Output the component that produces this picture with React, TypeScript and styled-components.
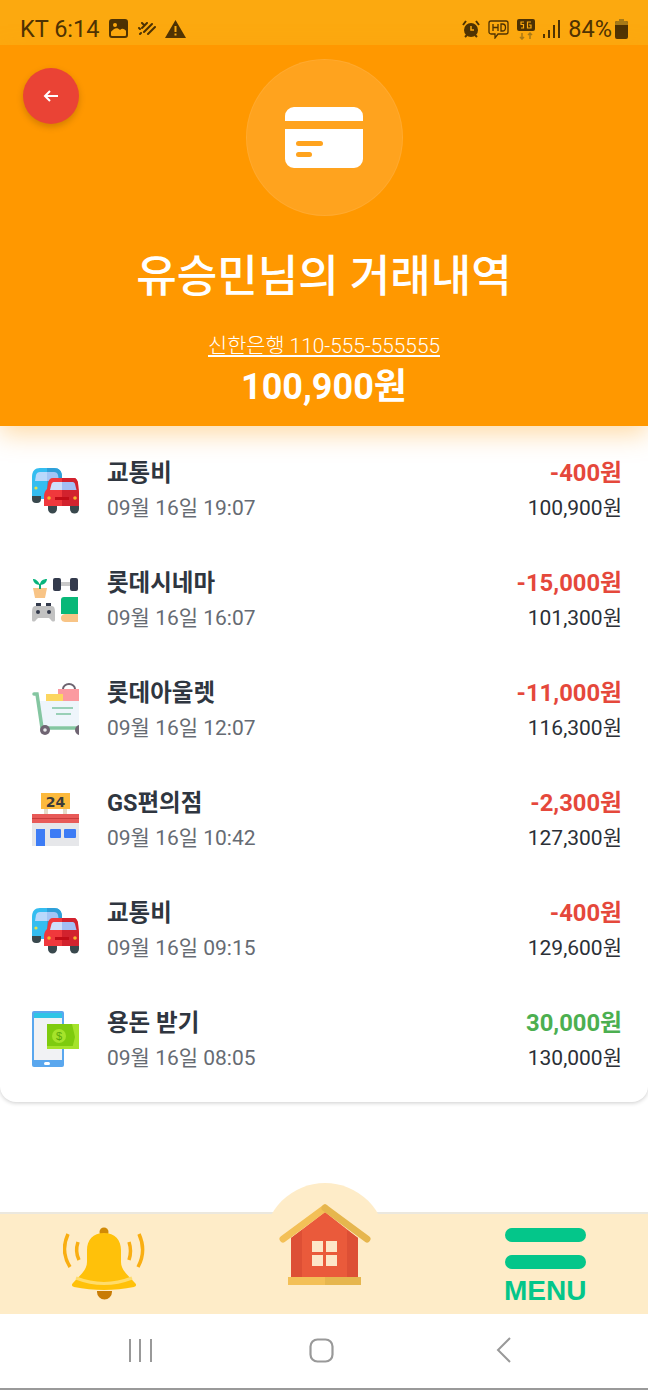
import styled, { createGlobalStyle } from "styled-components";

const GlobalStyle = createGlobalStyle`
  html, body {
    margin: 0;
    padding: 0;
    background: #ffffff;
  }
  body {
    font-family: Roboto, "Noto Sans CJK KR", sans-serif;
  }
`;

const Screen = styled.div`
  width: 648px;
  height: 1390px;
  display: flex;
  flex-direction: column;
  background: #fff;
  overflow: hidden;
`;

const StatusBar = styled.div`
  height: 45px;
  flex: none;
  box-sizing: border-box;
  padding: 13px 20px 0 20px;
  background: #fca90f;
  display: flex;
  align-items: center;
  justify-content: space-between;
  color: #4d3203;
  font-size: 23.5px;
`;

const StatusGroup = styled.div<{ $gap: number }>`
  display: flex;
  align-items: center;
  gap: ${(props) => props.$gap}px;
`;

const Carrier = styled.span`
  margin-right: 1px;
`;

const BatteryIcon = styled.svg`
  margin-left: -5px;
`;

const Header = styled.header`
  position: relative;
  z-index: 2;
  height: 381px;
  flex: none;
  box-sizing: border-box;
  padding-top: 14px;
  background: #ff9800;
  display: flex;
  flex-direction: column;
  align-items: center;
  color: #fff;
  box-shadow: 0 8px 24px rgba(255, 152, 0, 0.35);
`;

const BackButton = styled.button`
  position: absolute;
  left: 23px;
  top: 23px;
  width: 56px;
  height: 56px;
  padding: 0;
  border: none;
  border-radius: 50%;
  background: #ea4335;
  display: flex;
  align-items: center;
  justify-content: center;
  box-shadow: 0 3px 7px rgba(0, 0, 0, 0.18);
`;

const CardCircle = styled.div`
  width: 157px;
  height: 157px;
  box-sizing: border-box;
  border-radius: 50%;
  border: 1px solid rgba(255, 255, 255, 0.08);
  background: #ffa31e;
  display: flex;
  align-items: center;
  justify-content: center;
`;

const Title = styled.h1`
  margin: 32px 0 0;
  font-size: 44px;
  line-height: 58px;
  font-weight: 500;
`;

const Account = styled.div`
  margin-top: 25px;
  font-size: 20.8px;
  line-height: 30px;
  font-weight: 300;
  text-decoration: underline;
`;

const Balance = styled.div`
  margin-top: 4px;
  font-size: 36px;
  line-height: 44px;
  font-weight: 700;
`;

const List = styled.ul`
  list-style: none;
  height: 676px;
  flex: none;
  margin: 0;
  box-sizing: border-box;
  padding: 9px 26px 0 32px;
  border-radius: 0 0 16px 16px;
  background: #fff;
  box-shadow: 0 1px 4px rgba(0, 0, 0, 0.2);
`;

const Row = styled.li`
  height: 110px;
  display: flex;
  align-items: center;
`;

const IconSlot = styled.div`
  width: 47px;
  height: 47px;
  flex: none;
  margin-right: 28px;
  display: flex;
  align-items: center;
`;

const Info = styled.div`
  flex: 1;
  display: flex;
  flex-direction: column;
  gap: 7px;
`;

const Amounts = styled.div`
  display: flex;
  flex-direction: column;
  align-items: flex-end;
  gap: 7px;
`;

const Name = styled.div`
  font-size: 23.5px;
  line-height: 28px;
  font-weight: 700;
  color: #2f3640;
`;

const Time = styled.div`
  font-size: 21px;
  line-height: 28px;
  color: #666b73;
`;

const Amount = styled.div<{ $income: boolean }>`
  font-size: 23.8px;
  line-height: 28px;
  font-weight: 700;
  color: ${(props) => (props.$income ? "#4caf50" : "#e5483b")};
`;

const Remain = styled.div`
  font-size: 21px;
  line-height: 28px;
  color: #2b2f36;
`;

const Spacer = styled.div`
  flex: 1;
`;

const BottomBar = styled.nav`
  position: relative;
  height: 102px;
  flex: none;
  box-sizing: border-box;
  padding: 0 62px 0 63px;
  background: #feecc8;
  border-top: 2px solid #ebe8df;
  display: flex;
  align-items: center;
  justify-content: space-between;
`;

const HomeBump = styled.div`
  position: absolute;
  left: 264px;
  top: -31px;
  width: 122px;
  height: 122px;
  border-radius: 50%;
  background: #feecc8;
`;

const HomeIcon = styled.svg`
  position: absolute;
  left: 277px;
  top: -10px;
`;

const MenuButton = styled.div`
  width: 81px;
  display: flex;
  flex-direction: column;
  gap: 13px;
  color: #04c68a;
  margin-top: 5px;
`;

const MenuBar = styled.div`
  height: 14px;
  border-radius: 7px;
  background: #04c68a;
`;

const MenuLabel = styled.div`
  margin-top: -6px;
  margin-left: -1px;
  font-family: "Liberation Sans", sans-serif;
  font-size: 28px;
  line-height: 30px;
  font-weight: 700;
  white-space: nowrap;
`;

const SystemNav = styled.div`
  height: 76px;
  flex: none;
  box-sizing: border-box;
  border-bottom: 2px solid #9a9a9a;
  display: flex;
  align-items: center;
  padding-bottom: 2px;
  padding-left: 128px;
  background: #fff;
`;

const NavSlot = styled.div<{ $width: number }>`
  width: ${(props) => props.$width}px;
  flex: none;
  display: flex;
`;

function CarsIcon() {
  return (
    <svg width="47" height="47" viewBox="0 0 47 47">
      <path d="M0 10C0 4 3 1 8 1h14c5 0 8 3 8 9v22H0z" fill="#35bdf0" />
      <path d="M15 1h7c5 0 8 3 8 9v22H15z" fill="#2f9fd8" />
      <path d="M3 14l1-6c.5-2 2-3 4-3h7v9z" fill="#b9d8fb" />
      <path d="M15 5h7c2 0 3.500 1 4 3l1 6H15z" fill="#a2c5f5" />
      <path d="M0 29h9v3a4 4 0 0 1-4 4H4a4 4 0 0 1-4-4z" fill="#39484d" />
      <circle cx="4" cy="21" r="1.600" fill="#e9e04c" />
      <path d="M12 30c0-4 1-6 3-8l1-6c.5-3 2-5 5-5h21c2 0 3.500 2 4 5l.5 6c.5 2 .5 4 .5 8v9H12z" fill="#f0383c" />
      <path d="M30 11h12c2 0 3.500 2 4 5l.5 6c.5 2 .5 4 .5 8v9H30z" fill="#d2222e" />
      <path d="M18 23l1.500-6c.5-1.500 1.500-2 3-2H30v8z" fill="#cfe0fb" />
      <path d="M30 15h10c1.500 0 2.500.5 3 2l1.500 6H30z" fill="#a2bff5" />
      <rect x="23" y="30" width="14" height="3" fill="#c20d18" />
      <circle cx="17" cy="31" r="1.800" fill="#f9b32c" />
      <circle cx="43" cy="31" r="1.800" fill="#f9b32c" />
      <path d="M16 39h9v3a4.500 4.500 0 0 1-9 0z" fill="#39484d" />
      <path d="M38 39h9v3a4.500 4.500 0 0 1-9 0z" fill="#39484d" />
    </svg>
  );
}

function HobbyIcon() {
  return (
    <svg width="47" height="47" viewBox="0 0 47 47">
      <path d="M1 11h14l-2 10H3z" fill="#f8c486" />
      <path d="M8 12V7" stroke="#13a873" strokeWidth="2" />
      <path d="M8 8C6 3 3 2 1 2c0 3 3 6 7 6zM8 8c0-4 3-6 7-6 0 3-3 6-7 6z" fill="#08b47c" />
      <rect x="21" y="1" width="8" height="13" rx="2" fill="#333a4c" />
      <rect x="38" y="1" width="8" height="13" rx="2" fill="#333a4c" />
      <rect x="29" y="5" width="9" height="4" fill="#c9c9c9" />
      <rect x="4" y="26" width="5" height="5" fill="#333a4c" />
      <rect x="14" y="26" width="5" height="5" fill="#333a4c" />
      <path d="M3 29h17c2 0 3 2 3 6v8c0 2-3 2-4 0l-2-2H6l-2 2c-1 2-4 2-4 0v-8c0-4 1-6 3-6z" fill="#c2c2c2" />
      <circle cx="6" cy="35" r="2" fill="#333a4c" />
      <circle cx="17" cy="35" r="2" fill="#333a4c" />
      <path d="M29 23c0-2 1-3 3-3h14v17H29z" fill="#08b878" />
      <path d="M29 41c0-3 2-4 5-4h12v8H34c-3 0-5-1-5-4z" fill="#f8c486" />
    </svg>
  );
}

function CartIcon() {
  return (
    <svg width="47" height="54" viewBox="0 0 47 54">
      <path d="M31 8V6a6 5 0 0 1 12 0v2" fill="none" stroke="#6d6470" strokeWidth="2" />
      <rect x="26" y="6" width="21" height="12" fill="#fb9aa0" />
      <rect x="14" y="11" width="17" height="7" fill="#fcd660" />
      <path d="M7 18h40v25H10z" fill="#eef5fb" />
      <path d="M20 25h21M24 31h15" stroke="#7dc4a1" strokeWidth="1.500" />
      <path d="M2 11h3l5 34h37" fill="none" stroke="#84c6a1" strokeWidth="3.500" strokeLinecap="round" />
      <circle cx="13" cy="47" r="5" fill="#6f6472" />
      <circle cx="13" cy="47" r="1.800" fill="#e8e8ea" />
      <circle cx="48" cy="47" r="5" fill="#6f6472" />
    </svg>
  );
}

function StoreIcon() {
  return (
    <svg width="47" height="54" viewBox="0 0 47 54">
      <rect x="9" y="0" width="29" height="16" fill="#fcb93c" />
      <text x="23.500" y="13.500" textAnchor="middle" fontFamily="DejaVu Sans, sans-serif" fontWeight="700" fontSize="14" fill="#3a3a3a">24</text>
      <rect x="12" y="16" width="4" height="5" fill="#e6dcc8" />
      <rect x="31" y="16" width="4" height="5" fill="#e6dcc8" />
      <rect x="0" y="21" width="47" height="9" fill="#e85a58" />
      <rect x="0" y="25" width="47" height="1" fill="#c93d3d" />
      <rect x="0" y="30" width="47" height="23" fill="#e6e7ea" />
      <rect x="4" y="36" width="9" height="17" fill="#3d7cf5" />
      <rect x="18" y="36" width="11" height="9" rx="1" fill="#3d7cf5" />
      <rect x="32" y="36" width="12" height="9" rx="1" fill="#3d7cf5" />
    </svg>
  );
}

function AllowanceIcon() {
  return (
    <svg width="47" height="58" viewBox="0 0 47 58">
      <rect x="0" y="0" width="32" height="56" rx="2" fill="#5aa7ee" />
      <rect x="2" y="7" width="28" height="42" fill="#f1f2f4" />
      <rect x="2" y="2" width="28" height="5" fill="#2fc4e6" />
      <path d="M15 13h32v25H15z" fill="#a5e32b" />
      <path d="M15 13h28v22H15z" fill="#7ecb0e" />
      <path d="M40 13h7v25h-7l3-12z" fill="#a5e32b" />
      <circle cx="27" cy="25" r="7" fill="#a5e32b" />
      <text x="27" y="29" textAnchor="middle" fontFamily="Liberation Sans, sans-serif" fontSize="11" fill="#5aa80a">$</text>
      <rect x="12" y="51" width="6" height="3" rx="1.500" fill="#fff" />
    </svg>
  );
}

const rows = [
  { icon: <CarsIcon />, name: "교통비", time: "09월 16일 19:07", amount: "-400원", remain: "100,900원", income: false },
  { icon: <HobbyIcon />, name: "롯데시네마", time: "09월 16일 16:07", amount: "-15,000원", remain: "101,300원", income: false },
  { icon: <CartIcon />, name: "롯데아울렛", time: "09월 16일 12:07", amount: "-11,000원", remain: "116,300원", income: false },
  { icon: <StoreIcon />, name: "GS편의점", time: "09월 16일 10:42", amount: "-2,300원", remain: "127,300원", income: false },
  { icon: <CarsIcon />, name: "교통비", time: "09월 16일 09:15", amount: "-400원", remain: "129,600원", income: false },
  { icon: <AllowanceIcon />, name: "용돈 받기", time: "09월 16일 08:05", amount: "30,000원", remain: "130,000원", income: true },
];

export default function App() {
  return (
    <Screen>
      <GlobalStyle />
      <StatusBar>
        <StatusGroup $gap={9}>
          <Carrier>KT 6:14</Carrier>
          <svg width="19" height="20" viewBox="0 0 19 20">
            <rect x="1" y="1" width="17" height="17" rx="2" fill="none" stroke="#4d3203" strokeWidth="2" />
            <path d="M1 1h17v12c-3-4-5-4-7-2-3-3-6-2-10 3z" fill="#4d3203" />
            <circle cx="6" cy="6" r="2" fill="#fca90f" />
          </svg>
          <svg width="19" height="14" viewBox="0 0 19 14">
            <path d="M5 1l2 2M10 1L5 6M15 2l-8 8M18 5l-7 7M2 6l1 1M3 12l1-1" stroke="#4d3203" strokeWidth="2" strokeLinecap="round" />
          </svg>
          <svg width="21" height="18" viewBox="0 0 21 18">
            <path d="M10.500 0L21 18H0z" fill="#4d3203" />
            <rect x="9.500" y="6" width="2" height="6" fill="#fca90f" />
            <rect x="9.500" y="13.500" width="2" height="2" fill="#fca90f" />
          </svg>
        </StatusGroup>
        <StatusGroup $gap={8}>
          <svg width="18" height="18" viewBox="0 0 18 18">
            <circle cx="9" cy="10" r="7" fill="#4d3203" />
            <path d="M9 6v4h3" stroke="#fca90f" strokeWidth="1.500" fill="none" />
            <path d="M1 5l3-4M17 5l-3-4M3 17l2-2M15 17l-2-2" stroke="#4d3203" strokeWidth="2" />
          </svg>
          <svg width="21" height="19" viewBox="0 0 21 19">
            <path d="M3 1h15a2 2 0 0 1 2 2v9a2 2 0 0 1-2 2H10l-3 4v-4H3a2 2 0 0 1-2-2V3a2 2 0 0 1 2-2z" fill="none" stroke="#4d3203" strokeWidth="1.300" />
            <path d="M5 4v7M10 4v7M5 7.500h5M13 4v7h1.500c2 0 3-1.500 3-3.500S16.500 4 14.500 4z" fill="none" stroke="#4d3203" strokeWidth="1.300" />
          </svg>
          <svg width="18" height="21" viewBox="0 0 18 21">
            <rect x="0" y="0" width="18" height="12" rx="2" fill="#4d3203" />
            <path d="M7 3H4v2.500h2.500V9H4M14 3h-3.500v6H14V6h-2" fill="none" stroke="#fca90f" strokeWidth="1.200" />
            <path d="M5 14v6M3 18l2 2 2-2" stroke="#a77a17" strokeWidth="1.500" fill="none" />
            <path d="M13 20v-6M11 16l2-2 2 2" stroke="#a77a17" strokeWidth="1.500" fill="none" />
          </svg>
          <svg width="17" height="18" viewBox="0 0 17 18">
            <rect x="0" y="14" width="2" height="4" fill="#4d3203" />
            <rect x="5" y="10" width="2" height="8" fill="#4d3203" />
            <rect x="10" y="5" width="2" height="13" fill="#4d3203" />
            <rect x="15" y="0" width="2" height="18" fill="#4d3203" />
          </svg>
          <span>84%</span>
          <BatteryIcon width="13" height="20" viewBox="0 0 13 20">
            <path d="M4 0h5v2h2a2 2 0 0 1 2 2v14a2 2 0 0 1-2 2H2a2 2 0 0 1-2-2V4a2 2 0 0 1 2-2h2z" fill="#4d3203" />
            <path d="M4 0h5v2h2a2 2 0 0 1 2 2v2H0V4a2 2 0 0 1 2-2h2z" fill="#a77a17" />
          </BatteryIcon>
        </StatusGroup>
      </StatusBar>
      <Header>
        <BackButton aria-label="back">
          <svg width="16" height="14" viewBox="0 0 16 14">
            <path d="M15 7H2M7 2L2 7l5 5" fill="none" stroke="#fff" strokeWidth="2" />
          </svg>
        </BackButton>
        <CardCircle>
          <svg width="78" height="61" viewBox="0 0 78 61">
            <path d="M9 0h60a9 9 0 0 1 9 9v5H0V9a9 9 0 0 1 9-9zM0 22h78v30a9 9 0 0 1-9 9H9a9 9 0 0 1-9-9z" fill="#fff" />
            <rect x="11" y="34" width="27" height="5" rx="2.500" fill="#ffa31e" />
            <rect x="11" y="45" width="16" height="5" rx="2.500" fill="#ffa31e" />
          </svg>
        </CardCircle>
        <Title>유승민님의 거래내역</Title>
        <Account>신한은행 110-555-555555</Account>
        <Balance>100,900원</Balance>
      </Header>
      <List>
        {rows.map((row) => (
          <Row key={row.time}>
            <IconSlot>{row.icon}</IconSlot>
            <Info>
              <Name>{row.name}</Name>
              <Time>{row.time}</Time>
            </Info>
            <Amounts>
              <Amount $income={row.income}>{row.amount}</Amount>
              <Remain>{row.remain}</Remain>
            </Amounts>
          </Row>
        ))}
      </List>
      <Spacer />
      <BottomBar>
        <HomeBump />
        <HomeIcon width="94" height="82" viewBox="0 0 94 82">
          <path d="M14 34L48 8l33 26v40H14z" fill="#ea5a3b" />
          <path d="M14 34l11-8v48H14zM70 26l11 8v40H70z" fill="#dd4f35" />
          <path d="M6 35L48 4" fill="none" stroke="#f3c057" strokeWidth="7" strokeLinecap="round" />
          <path d="M48 4l42 31" fill="none" stroke="#e6b64e" strokeWidth="7" strokeLinecap="round" />
          <rect x="35" y="37" width="11" height="11" fill="#fde6c8" />
          <rect x="49" y="37" width="11" height="11" fill="#fde6c8" />
          <rect x="35" y="51" width="11" height="11" fill="#fde6c8" />
          <rect x="49" y="51" width="11" height="11" fill="#fde6c8" />
          <rect x="11" y="73" width="37" height="8" fill="#f3c057" />
          <rect x="48" y="73" width="36" height="8" fill="#e6b64e" />
        </HomeIcon>
        <svg width="82" height="74" viewBox="0 0 82 74">
          <path d="M5 7C0 18 0 29 7 40M76 7c5 11 5 22-1 33" fill="none" stroke="#f9ae12" strokeWidth="3.500" />
          <path d="M15 15c-2 6-2 12 1 18M66 15c2 6 2 12-0 18" fill="none" stroke="#f9ae12" strokeWidth="3.500" />
          <circle cx="41" cy="5" r="4.500" fill="#d18a06" />
          <path d="M41 6c-11 0-17 7-17 17v12c0 9-9 15-14 21-2 2-1 3 1 4 20 4 40 4 60 0 2-1 3-2 1-4-5-6-14-12-14-21V23c0-10-6-17-17-17z" fill="#ffc10a" />
          <path d="M13 51c18 7 38 7 56 0" fill="none" stroke="#ffdc6b" strokeWidth="3" />
          <path d="M34 64h15v1a7.500 7.500 0 0 1-15 0z" fill="#c97c05" />
        </svg>
        <MenuButton>
          <MenuBar />
          <MenuBar />
          <MenuLabel>MENU</MenuLabel>
        </MenuButton>
      </BottomBar>
      <SystemNav>
        <NavSlot $width={181}>
          <svg width="25" height="25" viewBox="0 0 25 25">
            <path d="M2 1v23M12 1v23M23 1v23" stroke="#999" strokeWidth="2" />
          </svg>
        </NavSlot>
        <NavSlot $width={187}>
          <svg width="25" height="25" viewBox="0 0 25 25">
            <rect x="1.500" y="1.500" width="22" height="22" rx="7" fill="none" stroke="#999" strokeWidth="2.200" />
          </svg>
        </NavSlot>
        <NavSlot $width={20}>
          <svg width="16" height="26" viewBox="0 0 16 26">
            <path d="M14 1L2 13l12 12" fill="none" stroke="#999" strokeWidth="2" />
          </svg>
        </NavSlot>
      </SystemNav>
    </Screen>
  );
}
